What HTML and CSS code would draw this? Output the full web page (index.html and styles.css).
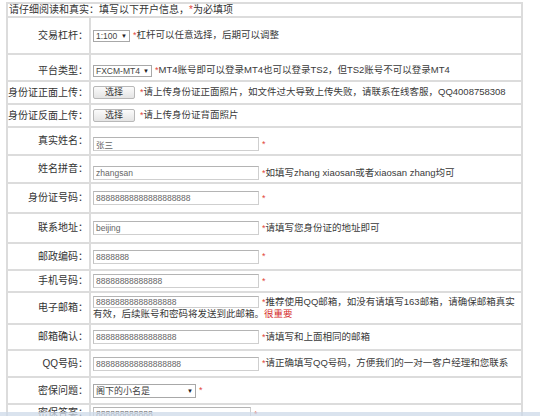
FILE: index.html
```html
<!DOCTYPE html>
<html lang="zh-CN">
<head>
<meta charset="utf-8">
<title>开户信息</title>
<link rel="stylesheet" href="styles.css">
</head>
<body>
<table class="form">
  <colgroup>
    <col class="col-lbl">
    <col class="col-fld">
  </colgroup>
  <tr class="h14">
    <td colspan="2" class="head">请仔细阅读和真实：填写以下开户信息，<span class="req">*</span>为必填项</td>
  </tr>
  <tr class="h37">
    <td class="lbl">交易杠杆：</td>
    <td class="fld"><span class="sel w-lev">1:100<i class="arr">▼</i></span><span class="hint"><span class="star">*</span>杠杆可以任意选择，后期可以调整</span></td>
  </tr>
  <tr class="h27 low">
    <td class="lbl">平台类型：</td>
    <td class="fld"><span class="sel w-plat">FXCM-MT4<i class="arr">▼</i></span><span class="hint hint-plat"><span class="star">*</span>MT4账号即可以登录MT4也可以登录TS2，但TS2账号不可以登录MT4</span></td>
  </tr>
  <tr class="h23">
    <td class="lbl">身份证正面上传：</td>
    <td class="fld"><button class="btn" type="button">选择</button><span class="hint"><span class="star">*</span>请上传身份证正面照片，如文件过大导致上传失败，请联系在线客服，QQ4008758308</span></td>
  </tr>
  <tr class="h23">
    <td class="lbl">身份证反面上传：</td>
    <td class="fld"><button class="btn" type="button">选择</button><span class="hint"><span class="star">*</span>请上传身份证背面照片</span></td>
  </tr>
  <tr class="h28">
    <td class="lbl">真实姓名：</td>
    <td class="fld pad6"><input class="inp" type="text" value="张三"><span class="hint"><span class="star">*</span></span></td>
  </tr>
  <tr class="h28">
    <td class="lbl">姓名拼音：</td>
    <td class="fld pad8"><input class="inp" type="text" value="zhangsan"><span class="hint"><span class="star">*</span>如填写zhang xiaosan或者xiaosan zhang均可</span></td>
  </tr>
  <tr class="h30">
    <td class="lbl">身份证号码：</td>
    <td class="fld"><input class="inp" type="text" value="88888888888888888888"><span class="hint"><span class="star">*</span></span></td>
  </tr>
  <tr class="h30">
    <td class="lbl">联系地址：</td>
    <td class="fld"><input class="inp" type="text" value="beijing"><span class="hint"><span class="star">*</span>请填写您身份证的地址即可</span></td>
  </tr>
  <tr class="h27">
    <td class="lbl">邮政编码：</td>
    <td class="fld"><input class="inp" type="text" value="8888888"><span class="hint"><span class="star">*</span></span></td>
  </tr>
  <tr class="h22">
    <td class="lbl">手机号码：</td>
    <td class="fld"><input class="inp" type="text" value="88888888888888"><span class="hint"><span class="star">*</span></span></td>
  </tr>
  <tr class="h32">
    <td class="lbl">电子邮箱：</td>
    <td class="fld wrap"><input class="inp inp-sm" type="text" value="88888888888888888"><span class="hint"><span class="star">*</span>推荐使用QQ邮箱，如没有请填写163邮箱，请确保邮箱真实有效，后续账号和密码将发送到此邮箱。<span class="imp">很重要</span></span></td>
  </tr>
  <tr class="h26">
    <td class="lbl">邮箱确认：</td>
    <td class="fld"><input class="inp" type="text" value="88888888888888888"><span class="hint"><span class="star">*</span>请填写和上面相同的邮箱</span></td>
  </tr>
  <tr class="h27">
    <td class="lbl">QQ号码：</td>
    <td class="fld"><input class="inp" type="text" value="888888888888888888"><span class="hint"><span class="star">*</span>请正确填写QQ号码，方便我们的一对一客户经理和您联系</span></td>
  </tr>
  <tr class="h27">
    <td class="lbl">密保问题：</td>
    <td class="fld"><span class="sel w-q">阁下的小名是<i class="arr">▼</i></span><span class="hint"><span class="star">*</span></span></td>
  </tr>
  <tr class="h24 top">
    <td class="lbl">密保答案：</td>
    <td class="fld"><input class="inp w-ans" type="text" value="888888888888"><span class="hint"><span class="star">*</span></span></td>
  </tr>
</table>
<div class="edge"></div>
</body>
</html>
```

FILE: styles.css
```css
html, body {
  margin: 0;
  padding: 0;
  background: #ffffff;
  overflow: hidden;
}

body {
  font-family: "Liberation Sans", "Noto Sans CJK SC", sans-serif;
  font-size: 10px;
  line-height: 12px;
  color: #333333;
}

.form {
  border-collapse: separate;
  border-spacing: 0;
  margin: 2px 0 0 6px;
  width: 517px;
  border-top: 2px solid #dcdcdc;
  border-left: 2px solid #dcdcdc;
  table-layout: fixed;
}

.col-lbl { width: 83px; }
.col-fld { width: 432px; }

.form td {
  box-sizing: border-box;
  padding: 0;
  border-right: 2px solid #dcdcdc;
  border-bottom: 2px solid #dcdcdc;
  vertical-align: middle;
  overflow: hidden;
}

.h14 > td { height: 14px; }
.h22 > td { height: 22px; }
.h23 > td { height: 23px; }
.h24 > td { height: 24px; }
.h26 > td { height: 26px; }
.h27 > td { height: 27px; }
.h28 > td { height: 28px; }
.h30 > td { height: 30px; }
.h32 > td { height: 32px; }
.h37 > td { height: 37px; }

.low > td { padding-top: 6px; }
.top > td { vertical-align: top; padding-top: 2px; }

.head {
  padding-left: 1px !important;
  font-size: 10px;
  color: #333333;
}

.req { color: #e2443c; }

.lbl {
  text-align: right;
  padding-right: 1px !important;
  font-size: 10px;
  white-space: nowrap;
  color: #333333;
}

.fld {
  padding-left: 2px !important;
  white-space: nowrap;
  font-size: 9.5px;
}

.fld.wrap { white-space: normal; }
.fld.pad6 { padding-top: 6px; }
.fld.pad8 { padding-top: 8px; }

.hint {
  color: #3a3a3a;
  font-size: 9.5px;
  margin-left: 3px;
}

.star {
  color: #e2443c;
  font-size: 9px;
}

.imp { color: #d42a2a; }

.inp {
  box-sizing: border-box;
  width: 166px;
  height: 14px;
  margin: 0;
  padding: 0 2px;
  border: 1px solid #cfcfcf;
  border-top-color: #b4b4b4;
  border-left-color: #c2c2c2;
  background: #ffffff;
  font-family: "Liberation Sans", "Noto Sans CJK SC", sans-serif;
  font-size: 8.5px;
  color: #666666;
  vertical-align: middle;
  outline: none;
}

.inp-sm { height: 12px; }
.w-ans { width: 158px; }

.sel {
  box-sizing: border-box;
  display: inline-flex;
  align-items: center;
  justify-content: space-between;
  height: 12px;
  padding: 0 2px 0 2px;
  border: 1px solid #a8a8a8;
  background: #ffffff;
  font-size: 8.5px;
  line-height: 10px;
  color: #444444;
  vertical-align: middle;
}

.w-lev { width: 37px; }
.w-plat { width: 59px; }
.w-q { width: 103px; height: 14px; font-size: 9px; }

.arr {
  font-style: normal;
  font-size: 6px;
  color: #222222;
}

.btn {
  box-sizing: border-box;
  width: 42px;
  height: 13px;
  margin: 0;
  padding: 0;
  border: 1px solid #b8b8b8;
  border-radius: 2px;
  background: linear-gradient(#fbfbfb, #e4e4e4);
  font-family: "Liberation Sans", "Noto Sans CJK SC", sans-serif;
  font-size: 9px;
  line-height: 11px;
  color: #333333;
  vertical-align: middle;
}

.btn + .hint { margin-left: 5px; }

.edge {
  position: fixed;
  left: 0;
  right: 0;
  bottom: 0;
  height: 4px;
  background: rgba(205, 218, 232, 0.75);
}
```
